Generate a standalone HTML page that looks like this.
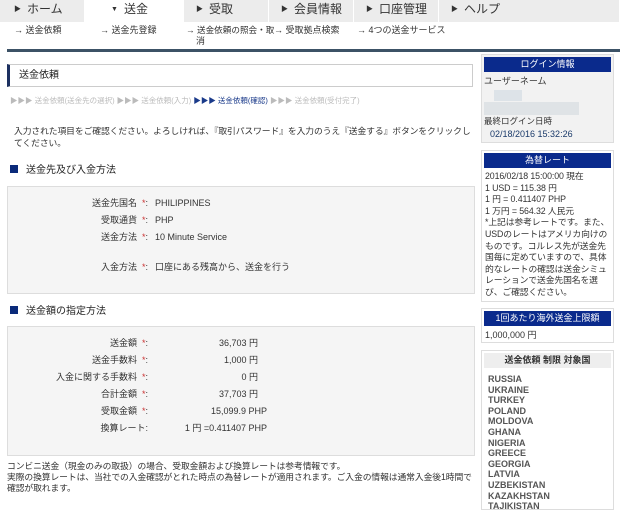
<!DOCTYPE html>
<html><head><meta charset="utf-8"><style>
*{margin:0;padding:0;box-sizing:border-box}
body{width:620px;height:502px;overflow:hidden;background:#fff;font-family:"Liberation Sans","Noto Sans CJK JP",sans-serif;font-size:9px;line-height:12px;color:#333;position:relative}
.a{position:absolute;white-space:nowrap}
.tab{position:absolute;top:0;height:22px;width:85px;background:#ececec;font-size:12px;line-height:16px;color:#333;padding:1px 0 0 12px;border-right:1px solid #fff}
.tab b{font-size:7px;font-weight:normal;margin-right:6px;vertical-align:2px}
.sub{position:absolute;top:24px;font-size:9px;color:#333}
.box{position:absolute;border:1px solid #ddd;background:#f5f5f5}
.lbl{position:absolute;text-align:right;width:140px;left:0}
.lbl i{color:#c33;font-style:normal;margin-left:5px}
.rb{position:absolute;left:481px;width:133px;border:1px solid #ddd;background:#f2f2f2}
.rh{background:#0a2a8c;color:#fff;text-align:center;height:15px;line-height:15px;margin:2px 2px 0;font-size:9px}
.sq{display:inline-block;width:8px;height:8px;background:#0a2a7a;margin-right:8px}
</style></head><body>
<div class="tab" style="left:0;padding-left:14px"><b>▶</b>ホーム</div>
<div class="tab" style="left:99px;background:#fff"><b>▼</b>送金</div>
<div class="tab" style="left:184px"><b>▶</b>受取</div>
<div class="tab" style="left:269px"><b>▶</b>会員情報</div>
<div class="tab" style="left:354px"><b>▶</b>口座管理</div>
<div class="tab" style="left:439px;width:181px"><b>▶</b>ヘルプ</div>
<div class="sub" style="left:14px">→ 送金依頼</div>
<div class="sub" style="left:100px">→ 送金先登録</div>
<div class="sub" style="left:186px;font-size:8.6px">→ 送金依頼の照会・取</div>
<div class="sub" style="left:196px;top:35px">消</div>
<div class="sub" style="left:274px">→ 受取拠点検索</div>
<div class="sub" style="left:357px">→ 4つの送金サービス</div>
<div class="a" style="left:7px;top:49px;width:613px;height:3px;background:#3c5266"></div>

<div class="a" style="left:7px;top:64px;width:466px;height:23px;border:1px solid #ccc;border-left:3px solid #1c3060;padding:5px 0 0 9px;font-size:10px;color:#222">送金依頼</div>
<div class="a" style="left:10px;top:95px;font-size:7.5px;color:#bbb">▶▶▶ 送金依頼(送金先の選択) ▶▶▶ 送金依頼(入力) <span style="color:#1a3a8a">▶▶▶ 送金依頼(確認)</span> ▶▶▶ 送金依頼(受付完了)</div>
<div class="a" style="left:14px;top:125px;line-height:12px;font-size:8.8px;letter-spacing:-0.1px">入力された項目をご確認ください。よろしければ、『取引パスワード』を入力のうえ『送金する』ボタンをクリックし<br>てください。</div>
<div class="a" style="left:10px;top:165px;font-size:10px;color:#222"><span class="sq"></span>送金先及び入金方法</div>
<div class="box" style="left:7px;top:186px;width:468px;height:108px">
<div class="lbl" style="top:10px">送金先国名<i>*</i>:</div><div class="a" style="left:147px;top:10px">PHILIPPINES</div>
<div class="lbl" style="top:27px">受取通貨<i>*</i>:</div><div class="a" style="left:147px;top:27px">PHP</div>
<div class="lbl" style="top:44px">送金方法<i>*</i>:</div><div class="a" style="left:147px;top:44px">10 Minute Service</div>
<div class="lbl" style="top:74px">入金方法<i>*</i>:</div><div class="a" style="left:147px;top:74px">口座にある残高から、送金を行う</div>
</div>
<div class="a" style="left:10px;top:306px;font-size:10px;color:#222"><span class="sq"></span>送金額の指定方法</div>
<div class="box" style="left:7px;top:326px;width:468px;height:130px">
<div class="lbl" style="top:10px">送金額<i>*</i>:</div><div class="a" style="left:180px;top:10px;width:70px;text-align:right">36,703 円</div>
<div class="lbl" style="top:27px">送金手数料<i>*</i>:</div><div class="a" style="left:180px;top:27px;width:70px;text-align:right">1,000 円</div>
<div class="lbl" style="top:44px">入金に関する手数料<i>*</i>:</div><div class="a" style="left:180px;top:44px;width:70px;text-align:right">0 円</div>
<div class="lbl" style="top:61px">合計金額<i>*</i>:</div><div class="a" style="left:180px;top:61px;width:70px;text-align:right">37,703 円</div>
<div class="lbl" style="top:78px">受取金額<i>*</i>:</div><div class="a" style="left:160px;top:78px;width:99px;text-align:right">15,099.9 PHP</div>
<div class="lbl" style="top:95px">換算レート:</div><div class="a" style="left:150px;top:95px;width:109px;text-align:right">1 円 =0.411407 PHP</div>
</div>
<div class="a" style="left:7px;top:461px;line-height:11px;font-size:8.8px;letter-spacing:-0.1px">コンビニ送金（現金のみの取扱）の場合、受取金額および換算レートは参考情報です。<br>実際の換算レートは、当社での入金確認がとれた時点の為替レートが適用されます。ご入金の情報は通常入金後1時間で<br>確認が取れます。</div>

<div class="rb" style="top:54px;height:89px">
<div class="rh">ログイン情報</div>
<div style="padding:3px 2px 2px;line-height:13px">ユーザーネーム</div>
<div style="margin-left:12px;width:28px;height:11px;background:#dde3e8"></div>
<div style="margin-left:2px;width:95px;height:13px;background:#dfe3e6;margin-top:1px"></div>
<div style="padding:1px 2px 0;font-size:8.5px;line-height:11px">最終ログイン日時</div>
<div style="padding:2px 0 0 8px;color:#1a3a6a;font-size:9px;line-height:11px">02/18/2016 15:32:26</div>
</div>
<div class="rb" style="top:150px;height:152px;background:#fff">
<div class="rh">為替レート</div>
<div style="padding:3px 3px;line-height:11.6px;font-size:8.8px;white-space:normal;letter-spacing:-0.1px">2016/02/18 15:00:00 現在<br>1 USD = 115.38 円<br>1 円 = 0.411407 PHP<br>1 万円 = 564.32 人民元<br>*上記は参考レートです。また、USDのレートはアメリカ向けのものです。コルレス先が送金先国毎に定めていますので、具体的なレートの確認は送金シミュレーションで送金先国名を選び、ご確認ください。</div>
</div>
<div class="rb" style="top:308px;height:35px;background:#fff">
<div class="rh">1回あたり海外送金上限額</div>
<div style="padding:3px 3px;font-size:9px">1,000,000 円</div>
</div>
<div class="rb" style="top:350px;height:160px;background:#fff">
<div style="background:#eee;margin:2px;height:15px;line-height:15px;text-align:center;font-size:9px;font-weight:bold;color:#333">送金依頼 制限 対象国</div>
<div style="padding:4px 6px;line-height:10.6px;font-weight:bold;font-size:9px;color:#555">RUSSIA<br>UKRAINE<br>TURKEY<br>POLAND<br>MOLDOVA<br>GHANA<br>NIGERIA<br>GREECE<br>GEORGIA<br>LATVIA<br>UZBEKISTAN<br>KAZAKHSTAN<br>TAJIKISTAN</div>
</div>
</body></html>
